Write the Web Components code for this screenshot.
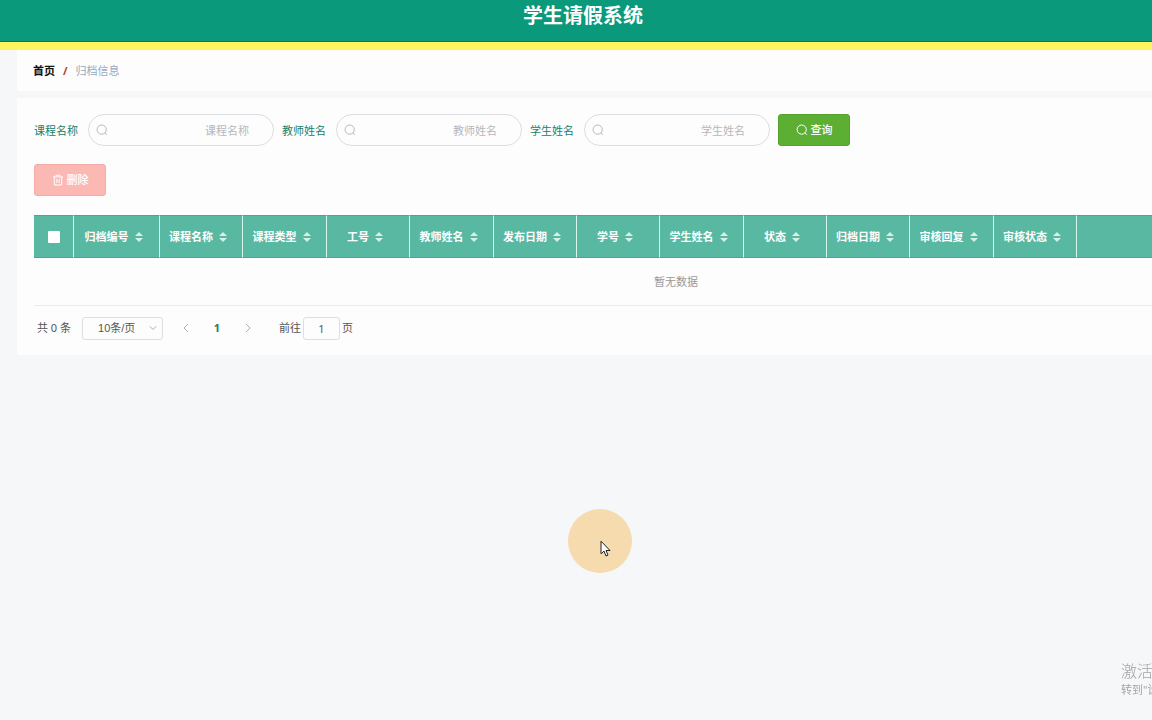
<!DOCTYPE html>
<html lang="zh-CN">
<head>
<meta charset="utf-8">
<title>学生请假系统</title>
<style>
html, body { margin: 0; height: 100%; }
body { overflow: hidden; background: #f5f7f9; color: #555; font: 11px/16px "Noto Sans", "Noto Sans CJK SC", sans-serif; }
</style>
</head>
<body>
<leave-app></leave-app>
<script>
const define = (name, html, setup) => customElements.define(name, class extends HTMLElement {
  connectedCallback() {
    if (this.shadowRoot) return;
    const t = document.createElement('template');
    t.innerHTML = html;
    this.attachShadow({ mode: 'open' }).append(t.content.cloneNode(true));
    if (setup) setup(this, this.shadowRoot);
  }
});

const searchIcon = '<svg viewBox="0 0 12 12" width="12" height="12" fill="none" stroke="currentColor" aria-hidden="true"><circle cx="5.7" cy="5.6" r="4.6"/><path d="M8.900 8.800l2 2"/></svg>';
const trashIcon = '<svg viewBox="0 0 12 12" width="12" height="12" fill="none" stroke="currentColor" aria-hidden="true"><path d="M1 2.900h10M4 2.700V1.200h4v1.500M2.300 3v8h7.400V3M4.900 5v4M7.100 5v4"/></svg>';

define('app-header', `
<style>
:host { display: block; background: #0b997b; border-bottom: 8px solid #fff45f; }
h1 { margin: 0; box-sizing: border-box; height: 42px; padding-left: 14px; border-bottom: 1px solid #0a7558; color: #fff; font-size: 20px; line-height: 32px; font-weight: 700; text-align: center; }
</style>
<h1><slot></slot></h1>`);

define('bread-crumb', `
<style>
:host { display: block; background: #fdfdfd; padding: 13px 16px 12px; }
nav { display: flex; gap: 8px; color: #97a8be; }
a { color: #111; font-weight: 700; text-decoration: none; }
i { color: #b5401c; font-weight: 700; font-style: normal; }
</style>
<nav aria-label="面包屑"><a href="#">首页</a><i>/</i><span><slot></slot></span></nav>`);

define('search-field', `
<style>
:host { display: flex; align-items: center; gap: 10px; color: #208068; }
label { line-height: 18px; padding-top: 2px; }
.box { display: grid; align-items: center; width: 186px; }
.box > * { grid-area: 1 / 1; }
svg { margin-left: 8px; color: #b5b7bc; }
input { box-sizing: border-box; width: 100%; height: 32px; padding: 0 24px 0 28px; border: 1px solid #dcdee2; border-radius: 16px; background: transparent; font: inherit; color: #555; text-align: right; outline: 0; }
input::placeholder { color: #b5b7bc; opacity: 1; }
</style>
<label for="q"></label><div class="box">${searchIcon}<input id="q" type="text"></div>`,
(el, root) => {
  root.querySelector('label').textContent = el.getAttribute('label');
  root.querySelector('input').placeholder = el.getAttribute('label');
});

define('action-button', `
<style>
:host { display: inline-flex; --bg: #5daf34; --edge: #55a42e; }
:host([kind="danger"]) { --bg: #fcb9b4; --edge: #f5aca6; }
button { box-sizing: border-box; display: flex; align-items: center; justify-content: center; gap: 3px; width: 72px; height: 32px; padding: 0; border: 1px solid var(--edge); border-radius: 3px; background: var(--bg); color: #fff; font: inherit; font-weight: 500; }
.icon { display: flex; }
</style>
<button type="button"><span class="icon"></span><slot></slot></button>`,
(el, root) => {
  const danger = el.getAttribute('kind') === 'danger';
  root.querySelector('.icon').innerHTML = danger ? trashIcon : searchIcon;
  root.querySelector('button').disabled = danger;
});

const columns = [['归档编号', 86], ['课程名称', 83], ['课程类型', 84], ['工号', 83], ['教师姓名', 84], ['发布日期', 83], ['学号', 83], ['学生姓名', 84], ['状态', 83], ['归档日期', 83], ['审核回复', 84], ['审核状态', 83]];

define('archive-table', `
<style>
:host { display: block; }
table { width: 100%; table-layout: fixed; border-collapse: separate; border-spacing: 0; border-bottom: 1px solid #e9ecf1; }
th { box-sizing: border-box; height: 43px; padding: 0; background: #59b8a1; color: #fff; border: solid #4da58e; border-width: 1px 0; border-right: 1px solid #d5f7ec; }
th:last-child { border-right: 0; }
th span { display: flex; align-items: center; justify-content: center; gap: 6px; padding-right: 6px; }
input { appearance: none; display: block; width: 12px; height: 12px; margin: 0 auto; background: #fff; border-radius: 1px; }
td { height: 47px; padding: 0; text-align: center; color: #999; }
</style>
<table>
<colgroup><col style="width:40px">${columns.map(c => `<col style="width:${c[1]}px">`).join('')}<col></colgroup>
<thead><tr><th><input type="checkbox" aria-label="全选"></th>
${columns.map(c => `<th scope="col"><span>${c[0]}<svg viewBox="0 0 8 10" width="8" height="10" fill="#d6f0e8" aria-hidden="true"><path d="M0 4L4 0l4 4zM0 6h8l-4 4z"/></svg></span></th>`).join('')}
<th></th></tr></thead>
<tbody><tr><td colspan="14">暂无数据</td></tr></tbody>
</table>`);

define('page-nav', `
<style>
:host { display: flex; align-items: center; padding-left: 3px; height: 24px; }
.size { display: grid; align-items: center; width: 81px; margin: 0 15px 0 11px; }
.size > * { grid-area: 1 / 1; }
.size svg { justify-self: end; margin-right: 6px; pointer-events: none; }
select, input { box-sizing: border-box; height: 23px; border: 1px solid #dcdee2; border-radius: 3px; background: transparent; color: #555; font: inherit; margin: 0; outline: 0; }
select { appearance: none; width: 100%; padding: 0 15px; font-family: "Liberation Sans", "Noto Sans CJK SC", sans-serif; }
input { width: 37px; padding: 0; text-align: center; margin: 0 2px; }
button { display: flex; align-items: center; justify-content: center; width: 16px; height: 23px; padding: 0; border: 0; background: none; font: inherit; color: #aaa; }
.num { width: 46px; color: #16805f; font-weight: 700; }
label { display: flex; align-items: center; margin-left: 23px; }
svg { fill: none; stroke: #aaadb3; }
</style>
<span>共 0 条</span>
<div class="size"><select aria-label="每页条数"><option>10条/页</option></select><svg viewBox="0 0 8 8" width="8" height="8"><path d="M.8 2.300L4 5.500l3.200-3.200"/></svg></div>
<button type="button" aria-label="上一页"><svg viewBox="0 0 8 10" width="8" height="10"><path d="M6 1L2 5l4 4"/></svg></button>
<button type="button" class="num">1</button>
<button type="button" aria-label="下一页"><svg viewBox="0 0 8 10" width="8" height="10"><path d="M2 1l4 4-4 4"/></svg></button>
<label>前往<input type="text" value="1">页</label>`);

define('click-pointer', `
<style>
:host { position: fixed; left: 568px; top: 509px; width: 64px; height: 64px; border-radius: 50%; background: #f5dbae; pointer-events: none; }
svg { position: absolute; left: 32px; top: 31px; }
</style>
<svg width="11" height="18" viewBox="0 0 11 18" fill="#fff" stroke="#222"><path d="M1 1.200v12.600l3-2.700 2 4.900 2-.9-2-4.600h4z"/></svg>`);

define('activation-note', `
<style>
:host { position: fixed; right: 0; bottom: 22px; width: 31px; overflow: hidden; white-space: nowrap; color: #a2a4a6; pointer-events: none; }
p { margin: 0; font-size: 16px; line-height: 22px; font-weight: 300; }
small { display: block; font-size: 11px; line-height: 16px; }
</style>
<p>激活 Windows</p><small>转到"设置"以激活 Windows。</small>`);

define('leave-app', `
<style>
:host { display: block; min-height: 100vh; overflow: hidden; }
main { display: flex; flex-direction: column; gap: 7px; margin: 0 -183px 0 17px; }
.card { background: #fdfdfd; padding: 16px 17px; }
form { display: flex; gap: 8px; margin-bottom: 18px; }
action-button { vertical-align: top; }
archive-table { margin: 19px 0 10px; }
.list { padding-bottom: 15px; }
</style>
<app-header>学生请假系统</app-header>
<main>
<bread-crumb>归档信息</bread-crumb>
<section class="card list">
<form><search-field label="课程名称"></search-field><search-field label="教师姓名"></search-field><search-field label="学生姓名"></search-field><action-button>查询</action-button></form>
<action-button kind="danger">删除</action-button>
<archive-table></archive-table>
<page-nav></page-nav>
</section>
</main>
<click-pointer></click-pointer>
<activation-note></activation-note>`);
</script>
</body>
</html>
